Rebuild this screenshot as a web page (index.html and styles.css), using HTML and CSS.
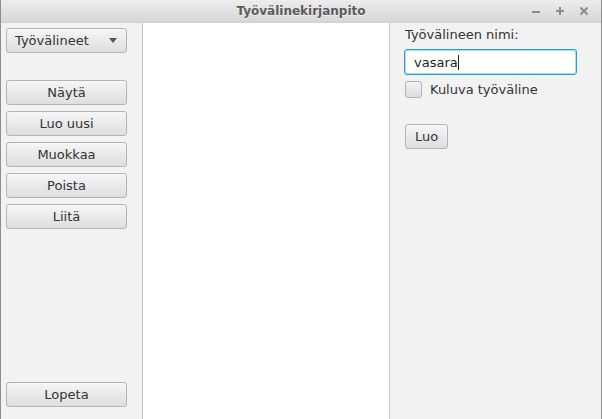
FILE: index.html
```html
<!DOCTYPE html>
<html lang="fi">
<head>
<meta charset="utf-8">
<title>Työvälinekirjanpito</title>
<link rel="stylesheet" href="styles.css">
</head>
<body>
<div class="window">
  <div class="titlebar">
    <span class="title">Työvälinekirjanpito</span>
    <div class="wm-buttons">
      <svg class="wm" width="10" height="10" viewBox="0 0 10 10"><rect x="1" y="5" width="8" height="2" fill="#8c8c8c"/></svg>
      <svg class="wm" width="10" height="10" viewBox="0 0 10 10"><rect x="1" y="4" width="8" height="2" fill="#8c8c8c"/><rect x="4" y="1" width="2" height="8" fill="#8c8c8c"/></svg>
      <svg class="wm" width="10" height="10" viewBox="0 0 10 10"><path d="M1.5 1.5 L8.5 8.5 M8.5 1.5 L1.5 8.5" stroke="#8c8c8c" stroke-width="2"/></svg>
    </div>
  </div>
  <div class="content">
    <div class="sidebar">
      <div class="combo">
        <span>Työvälineet</span>
        <svg class="arrow" width="8" height="5" viewBox="0 0 8 5"><path d="M0 0 H8 L4 5 Z" fill="#555"/></svg>
      </div>
      <div class="actions">
        <button class="btn wide">Näytä</button>
        <button class="btn wide">Luo uusi</button>
        <button class="btn wide">Muokkaa</button>
        <button class="btn wide">Poista</button>
        <button class="btn wide">Liitä</button>
      </div>
      <div class="spacer"></div>
      <button class="btn wide">Lopeta</button>
    </div>
    <div class="list"></div>
    <div class="form">
      <label class="label">Työvälineen nimi:</label>
      <div class="field"><span>vasara</span><span class="caret"></span></div>
      <div class="check-row">
        <span class="checkbox"></span>
        <span>Kuluva työväline</span>
      </div>
      <button class="btn small">Luo</button>
    </div>
  </div>
</div>
</body>
</html>
```

FILE: styles.css
```css
* { box-sizing: border-box; }
html, body { margin: 0; padding: 0; }
body {
  width: 602px;
  height: 419px;
  font-family: "DejaVu Sans", "Liberation Sans", sans-serif;
  font-size: 13px;
  color: #333;
  overflow: hidden;
}
.window {
  width: 602px;
  height: 419px;
  display: flex;
  flex-direction: column;
  border-left: 1px solid #8e8e8e;
  border-right: 1px solid #8e8e8e;
  background: #f2f2f2;
}
.titlebar {
  height: 23px;
  flex: none;
  position: relative;
  display: flex;
  align-items: center;
  justify-content: center;
  background: linear-gradient(#ededed, #d6d6d6);
  border-bottom: 1px solid #d2d2d2;
}
.title {
  font-weight: bold;
  font-size: 12px;
  color: #5b5b5b;
  text-shadow: 0 1px 0 rgba(255,255,255,0.6);
}
.wm-buttons {
  position: absolute;
  right: 12px;
  top: 6px;
  display: flex;
  gap: 14px;
}
.wm { display: block; }
.content {
  flex: 1;
  display: flex;
  min-height: 0;
}
.sidebar {
  width: 142px;
  flex: none;
  display: flex;
  flex-direction: column;
  padding: 5px 15px 12px 5px;
  border-right: 1px solid #c6c6c6;
}
.combo {
  height: 25px;
  width: 121px;
  display: flex;
  align-items: center;
  justify-content: space-between;
  padding: 0 9px 0 8px;
  border: 1px solid #b4b4b4;
  border-radius: 3px;
  background: linear-gradient(#f6f6f6, #dedede);
  color: #333;
}
.arrow { display: block; }
.actions {
  margin-top: 27px;
  display: flex;
  flex-direction: column;
  gap: 6px;
}
.spacer { flex: 1; }
.btn {
  font-family: inherit;
  font-size: 13px;
  color: #333;
  height: 25px;
  padding: 0;
  border: 1px solid #b4b4b4;
  border-radius: 3px;
  background: linear-gradient(#f6f6f6, #dedede);
  display: flex;
  align-items: center;
  justify-content: center;
}
.btn.wide { width: 121px; }
.btn.small { width: 43px; }
.list {
  width: 247px;
  flex: none;
  background: #ffffff;
  border-right: 1px solid #c6c6c6;
}
.form {
  flex: 1;
  display: flex;
  flex-direction: column;
  align-items: flex-start;
  padding: 4px 0 0 14px;
}
.label {
  line-height: 15px;
  padding-left: 1px;
  color: #333;
}
.field {
  margin-top: 7px;
  width: 173px;
  height: 26px;
  display: flex;
  align-items: center;
  padding-left: 9px;
  border: 1px solid #2a9dd6;
  border-radius: 3px;
  background: #fff;
  box-shadow: inset 0 0 0 1px #a9dbf2;
  color: #222;
}
.caret {
  display: inline-block;
  width: 1px;
  height: 15px;
  background: #222;
}
.check-row {
  margin-top: 6px;
  margin-left: 1px;
  display: flex;
  align-items: center;
  gap: 8px;
}
.checkbox {
  width: 17px;
  height: 17px;
  border: 1px solid #b4b4b4;
  border-radius: 3px;
  background: linear-gradient(#f4f4f4, #dcdcdc);
}
.btn.small { margin-top: 26px; margin-left: 1px; }
```
